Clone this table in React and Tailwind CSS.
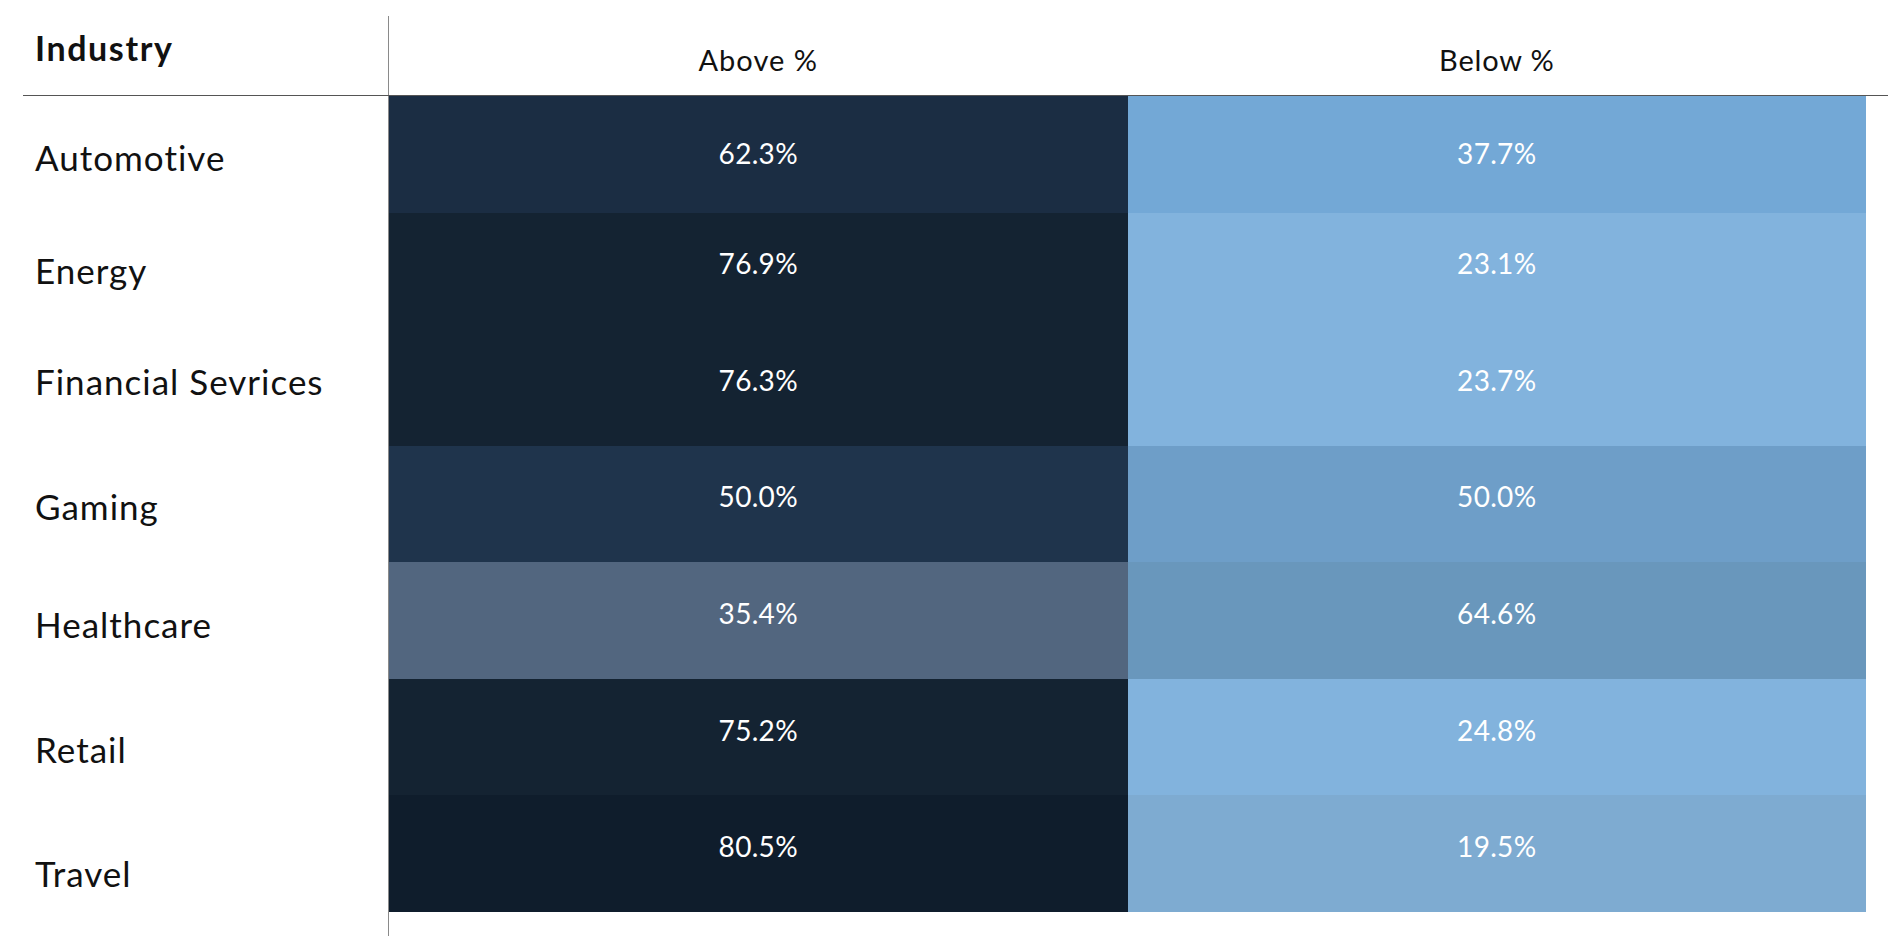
import React from 'react';

const rows = [
  { name: 'Automotive', above: '62.3%', below: '37.7%', aboveBg: 'bg-[#1b2d43]', belowBg: 'bg-[#73a8d6]', mt: 'mt-[44px]', pb: 'pb-[2px]' },
  { name: 'Energy', above: '76.9%', below: '23.1%', aboveBg: 'bg-[#142332]', belowBg: 'bg-[#82b3dd]', mt: 'mt-[78px]', pb: 'pb-[15px]' },
  { name: 'Financial Sevrices', above: '76.3%', below: '23.7%', aboveBg: 'bg-[#142332]', belowBg: 'bg-[#82b3dd]', mt: 'mt-[76px]', pb: 'pb-[15px]' },
  { name: 'Gaming', above: '50.0%', below: '50.0%', aboveBg: 'bg-[#1f344c]', belowBg: 'bg-[#6e9ec8]', mt: 'mt-[90px]', pb: 'pb-[16px]' },
  { name: 'Healthcare', above: '35.4%', below: '64.6%', aboveBg: 'bg-[#52667f]', belowBg: 'bg-[#6997bc]', mt: 'mt-[83px]', pb: 'pb-[16px]' },
  { name: 'Retail', above: '75.2%', below: '24.8%', aboveBg: 'bg-[#142332]', belowBg: 'bg-[#82b3dd]', mt: 'mt-[90px]', pb: 'pb-[15px]' },
  { name: 'Travel', above: '80.5%', below: '19.5%', aboveBg: 'bg-[#0f1d2c]', belowBg: 'bg-[#7eabd1]', mt: 'mt-[89px]', pb: 'pb-[15px]' },
];

const Cell = ({ value, bg, pb }) => (
  <div className={`${bg} ${pb} flex items-center justify-center text-[28px] leading-none text-white tracking-[0.3px]`}>
    {value}
  </div>
);

export default function App() {
  return (
    <div className="w-[1892px] h-[936px] bg-white pt-[16px] pl-[23px] font-['Lato',sans-serif] text-[#111]">
      <div className="w-[1865px] h-full flex flex-col">
        {/* header */}
        <div className="flex h-[80px] border-b border-[#555]">
          <div className="w-[366px] border-r border-[#8a8a8a] pl-[12px] pt-[15px] text-[34px] font-bold leading-none tracking-[1.6px]">
            Industry
          </div>
          <div className="w-[1477px] grid grid-cols-2">
            <div className="pt-[29px] text-center text-[29px] leading-none tracking-[1px]">Above %</div>
            <div className="pt-[29px] text-center text-[29px] leading-none tracking-[0.8px]">Below %</div>
          </div>
        </div>

        {/* body */}
        <div className="flex flex-1">
          <div className="w-[366px] border-r border-[#8a8a8a] flex flex-col pl-[12px]">
            {rows.map((r) => (
              <div key={r.name} className={`${r.mt} text-[35px] leading-none tracking-[1px]`}>
                {r.name}
              </div>
            ))}
          </div>
          <div className="w-[1477px] h-[816px] grid grid-cols-2 grid-rows-7">
            {rows.map((r) => (
              <React.Fragment key={r.name}>
                <Cell value={r.above} bg={r.aboveBg} pb={r.pb} />
                <Cell value={r.below} bg={r.belowBg} pb={r.pb} />
              </React.Fragment>
            ))}
          </div>
        </div>
      </div>
    </div>
  );
}
